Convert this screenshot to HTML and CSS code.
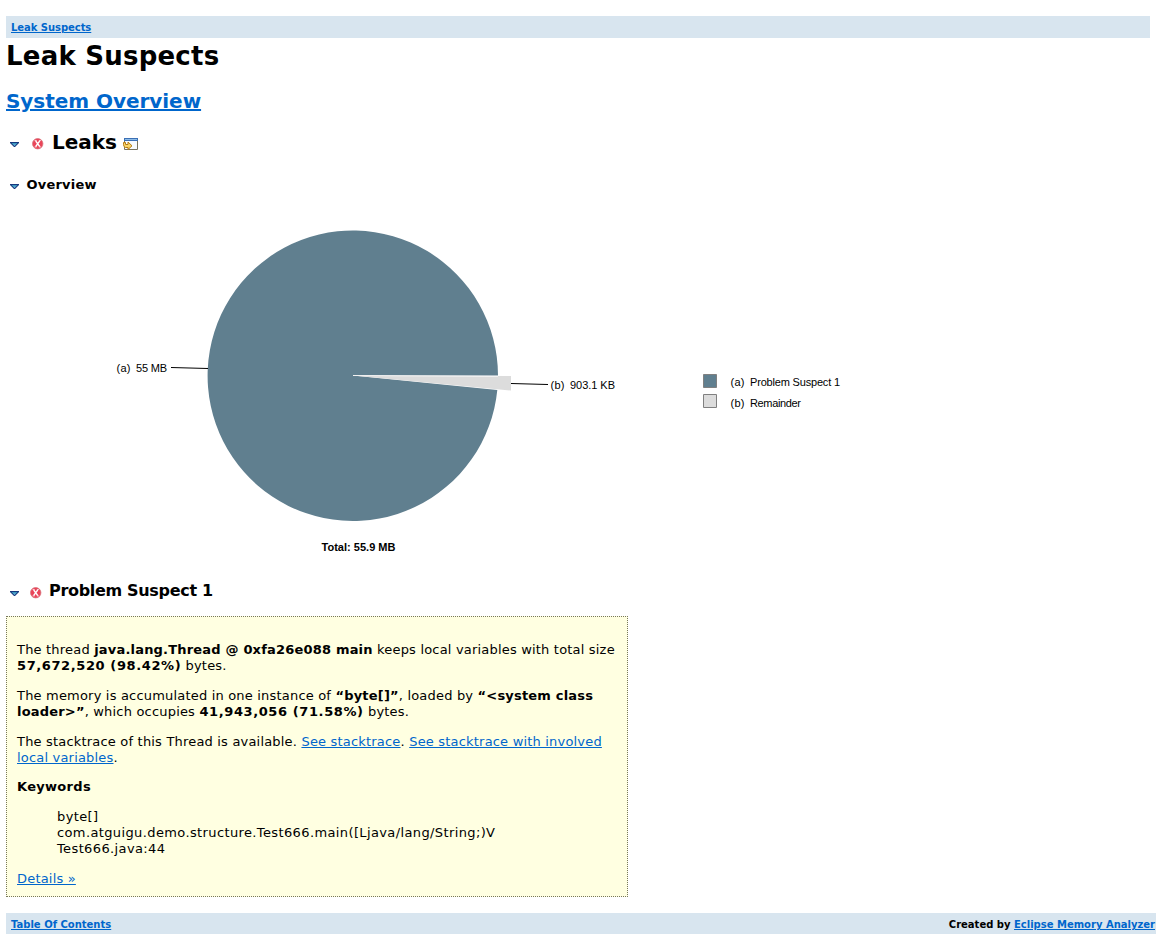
FILE: index.html
```html
<!DOCTYPE html>
<html lang="en">
<head>
<meta charset="utf-8">
<title>Leak Suspects</title>
<link rel="stylesheet" href="styles.css">
</head>
<body>
<svg class="defs" width="0" height="0" aria-hidden="true">
  <defs>
    <linearGradient id="blue" x1="0" y1="0" x2="0" y2="1"><stop offset="0" stop-color="#2d8db8"/><stop offset="1" stop-color="#7ccbe6"/></linearGradient>
    <symbol id="arrow" viewBox="0 0 9 5"><path d="M0 0H9V1L5 5H4L0 1Z" fill="#17387e"/><path d="M1.5 1H7.5L4.5 4Z" fill="url(#blue)"/></symbol>
    <symbol id="error" viewBox="0 0 12 12"><circle cx="5.700" cy="5.700" r="5.200" fill="#ea4459" stroke="#d7717a" stroke-width=".8"/><path d="M3.700 3L7.700 8.500M7.700 3L3.700 8.500" stroke="#fff" stroke-width="1.300"/><path d="M2.600 2.600H4.600M6.900 2.600H8.900M2.600 8.900H4.600M6.900 8.900H8.900" stroke="#fff" stroke-width=".8"/></symbol>
  </defs>
</svg>
<header class="topbar"><a href="#">Leak Suspects</a></header>
<main>
  <h1>Leak Suspects</h1>
  <h2 class="system"><a href="#">System Overview</a></h2>
  <h2 class="leaks">
    <svg class="arrow" width="9" height="5"><use href="#arrow"/></svg>
    <svg class="error" width="12" height="12"><use href="#error"/></svg>
    <span>Leaks</span>
    <svg class="open" width="15" height="13" viewBox="0 0 15 13">
      <path d="M1.500.500H14.500V11.500H1.500Z" fill="#f7fbff" stroke="#77735f"/>
      <path d="M1 0H15V3H1Z" fill="#3c70b5"/><path d="M2 1H14V2H2Z" fill="#8dbce8"/>
      <path d="M.500 4.500H2.500V6.500H5V4L9 7.800L5 11.500V9.500H2.500Q.500 9 .500 6.500Z" fill="#f8d568" stroke="#b47b16"/>
    </svg>
  </h2>
  <h3 class="overview"><svg class="arrow" width="9" height="5"><use href="#arrow"/></svg><span>Overview</span></h3>
  <svg class="chart" width="850" height="370" viewBox="0 200 850 370">
    <path d="M352.800 375.500H498A145.200 145.200 0 1 0 497.300 390Z" fill="#607f8f"/>
    <path d="M353 375.500L511 376V390.500Z" fill="#dcdcdc"/>
    <path d="M353 375.500L498 376.500" stroke="#f3f3f3" fill="none"/>
    <path d="M171 367.500L208 368.500M511 383.500L548 384.500" stroke="#000" fill="none"/>
    <g class="labels">
      <text x="116.500" y="372" textLength="14">(a)</text><text x="136" y="372" textLength="31">55 MB</text>
      <text x="550.500" y="389" textLength="14">(b)</text><text x="570" y="389" textLength="45">903.1 KB</text>
      <text x="730.500" y="386" textLength="14">(a)</text><text x="750" y="386" textLength="90">Problem Suspect 1</text>
      <text x="730.500" y="407" textLength="14">(b)</text><text x="750" y="407" textLength="51">Remainder</text>
      <text class="total" x="321.500" y="551" textLength="74">Total: 55.9 MB</text>
    </g>
    <g stroke="#808080"><path d="M703.500 374.500H716.500V387.500H703.500Z" fill="#607f8f"/><path d="M703.500 394.500H716.500V407.500H703.500Z" fill="#dcdcdc"/></g>
  </svg>
  <h3 class="problem"><svg class="arrow" width="9" height="5"><use href="#arrow"/></svg><svg class="error" width="12" height="12"><use href="#error"/></svg><span>Problem Suspect 1</span></h3>
  <section class="suspect">
    <p>The thread <strong>java.lang.Thread @ 0xfa26e088 main</strong> keeps local variables with total size<br><strong class="figure">57,672,520 (98.42%)</strong> bytes.</p>
    <p>The memory is accumulated in one instance of <strong>“byte[]”</strong>, loaded by <strong>“&lt;system class</strong><br><strong>loader&gt;”</strong>, which occupies <strong class="figure">41,943,056 (71.58%)</strong> bytes.</p>
    <p class="trace">The stacktrace of this Thread is available. <a href="#">See stacktrace</a>. <a href="#">See stacktrace with involved<br>local variables</a>.</p>
    <p class="keywords"><strong>Keywords</strong></p>
    <p class="keys">byte[]<br>com.atguigu.demo.structure.Test666.main([Ljava/lang/String;)V<br>Test666.java:44</p>
    <p><a href="#">Details »</a></p>
  </section>
</main>
<footer class="bottombar"><a href="#">Table Of Contents</a><span>Created by <a href="#">Eclipse Memory Analyzer</a></span></footer>
</body>
</html>
```
FILE: styles.css
```css
* { box-sizing: border-box; }
html { background: #fff; overflow: hidden; }
body { margin: 0; padding: 16px 0 0 6px; height: 934px; font: 13px/16px Verdana, "DejaVu Sans", sans-serif; color: #000; }
.defs { position: absolute; }
a { color: #0066cc; text-decoration: underline; text-underline-offset: 1px; }
svg { display: block; flex: none; }
h1, h2, h3, p { margin: 0; white-space: nowrap; }
.topbar, .bottombar { background: #d8e5ef; font-size: 10px; font-weight: bold; line-height: 24px; padding-left: 5px; }
.topbar { height: 22px; margin-right: 6px; letter-spacing: -.05px; }
.bottombar { height: 21px; margin-top: 16px; padding-right: 1px; display: flex; justify-content: space-between; }
h1 { height: 48px; font-size: 26px; line-height: 36px; letter-spacing: .23px; }
h2 { font-size: 20px; height: 42px; line-height: 30px; }
.system { letter-spacing: -.04px; }
.leaks, .overview, .problem { display: flex; }
.leaks { line-height: 28px; }
.arrow { margin: 14px 0 0 4px; }
.leaks .error { margin: 10px 8px 0 13px; }
.open { margin: 10px 0 0 6px; }
.overview { font-size: 13px; height: 30px; line-height: 29px; letter-spacing: .2px; }
.overview .arrow { margin-top: 14px; margin-right: 7.500px; }
.chart { margin-left: -6px; }
.labels { font: 11px "Liberation Sans", Arial, sans-serif; }
.total { font-weight: bold; }
.problem { font-size: 16px; height: 46px; line-height: 42px; letter-spacing: -.32px; }
.problem .arrow { margin-top: 21px; }
.problem .error { margin: 17px 7px 0 11px; }
.suspect { width: 622px; height: 281px; border: 1px dotted #77775c; background: #ffffe1; padding: 25px 10px 0; letter-spacing: .19px; }
.suspect p { margin-bottom: 14px; }
.suspect .trace { margin-bottom: 13px; }
.suspect .keywords { letter-spacing: .3px; }
.suspect .figure { letter-spacing: .6px; }
.suspect .keys { margin-left: 40px; letter-spacing: .38px; }
```
